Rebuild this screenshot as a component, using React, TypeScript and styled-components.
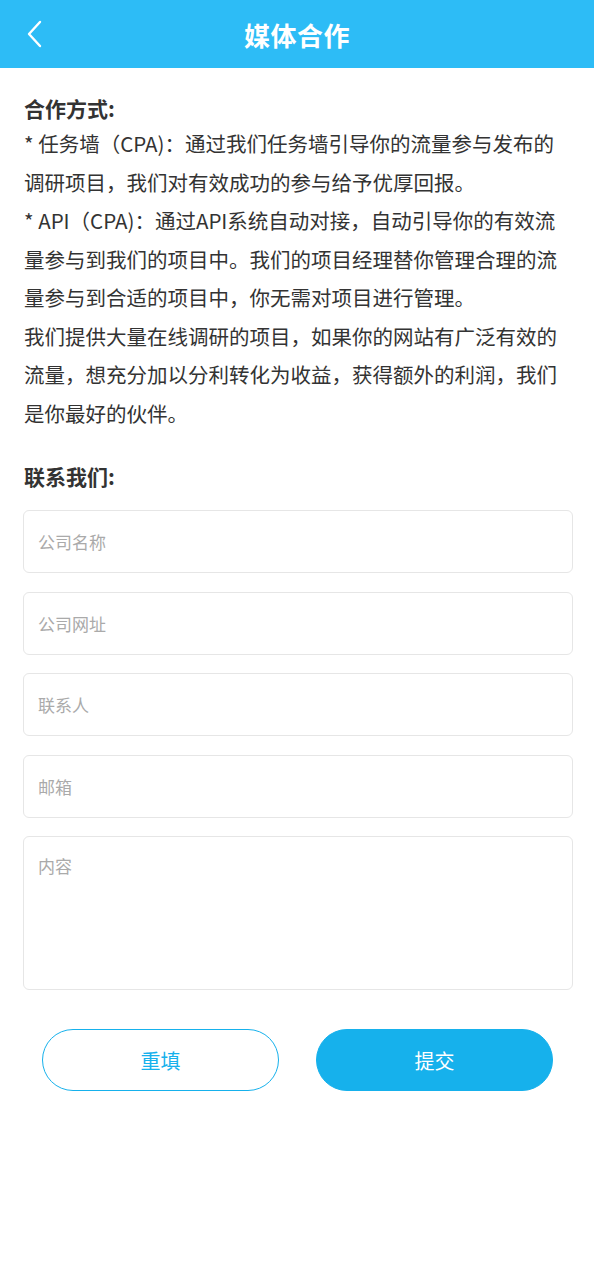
import React, { useState } from 'react';
import styled, { createGlobalStyle } from 'styled-components';

const GlobalStyle = createGlobalStyle`
  html, body {
    margin: 0;
    padding: 0;
    background: #fff;
  }
  body {
    font-family: "Noto Sans CJK SC", "Noto Sans", sans-serif;
    color: #333;
  }
  * {
    box-sizing: border-box;
  }
`;

const Page = styled.div`
  width: 594px;
  min-height: 1280px;
  background: #fff;
`;

const Header = styled.header`
  position: relative;
  height: 68px;
  background: #2dbcf6;
  display: flex;
  align-items: center;
  justify-content: center;
`;

const BackButton = styled.button`
  position: absolute;
  left: 19px;
  top: 18px;
  width: 32px;
  height: 32px;
  padding: 0;
  border: none;
  background: none;
  display: flex;
  align-items: center;
  justify-content: center;
  cursor: pointer;
`;

const Title = styled.h1`
  margin: 0;
  color: #fff;
  font-size: 26px;
  font-weight: 700;
  letter-spacing: 0.5px;
`;

const Content = styled.main`
  padding: 24px 24px 0;
`;

const SectionTitle = styled.h2`
  margin: 0;
  font-size: 21px;
  font-weight: 700;
  line-height: 32px;
  color: #333;
`;

const Paragraph = styled.p`
  margin: 0;
  font-size: 20.5px;
  line-height: 38.5px;
  color: #333;
`;

const Intro = styled.div`
  margin-bottom: 28px;
`;

const Form = styled.form`
  display: flex;
  flex-direction: column;
  gap: 18.5px;
  margin: 18px -3px 0 -1px;
`;

const Field = styled.input`
  width: 100%;
  height: 63px;
  padding: 0 14px;
  border: 1px solid #e6e6e6;
  border-radius: 6px;
  font-family: inherit;
  font-size: 17px;
  color: #333;
  outline: none;
  &::placeholder {
    color: #aaa;
  }
`;

const Area = styled.textarea`
  width: 100%;
  height: 154px;
  padding: 16px 14px;
  border: 1px solid #e6e6e6;
  border-radius: 6px;
  font-family: inherit;
  font-size: 17px;
  color: #333;
  resize: none;
  outline: none;
  &::placeholder {
    color: #aaa;
  }
`;

const Actions = styled.div`
  display: flex;
  justify-content: space-between;
  padding: 0 20px 0 19px;
  margin-top: 20.5px;
`;

const Pill = styled.button<{ $filled?: boolean }>`
  width: 237px;
  height: 62px;
  border-radius: 31px;
  border: 1px solid #16b1ec;
  background: ${(p) => (p.$filled ? '#16b1ec' : '#fff')};
  color: ${(p) => (p.$filled ? '#fff' : '#16b1ec')};
  font-family: inherit;
  font-size: 20px;
  cursor: pointer;
`;

const emptyForm = { name: '', site: '', contact: '', email: '', content: '' };

export default function App() {
  const [form, setForm] = useState(emptyForm);

  const update = (key: keyof typeof form) => (e: React.ChangeEvent<HTMLInputElement | HTMLTextAreaElement>) =>
    setForm({ ...form, [key]: e.target.value });

  return (
    <Page>
      <GlobalStyle />
      <Header>
        <BackButton aria-label="返回">
          <svg width="18" height="28" viewBox="0 0 18 28" fill="none">
            <path d="M14 2 L3 14 L14 26" stroke="#fff" strokeWidth="2.4" strokeLinecap="round" strokeLinejoin="round" />
          </svg>
        </BackButton>
        <Title>媒体合作</Title>
      </Header>
      <Content>
        <Intro>
          <SectionTitle>合作方式:</SectionTitle>
          <Paragraph>* 任务墙（CPA)：通过我们任务墙引导你的流量参与发布的调研项目，我们对有效成功的参与给予优厚回报。</Paragraph>
          <Paragraph>* API（CPA)：通过API系统自动对接，自动引导你的有效流量参与到我们的项目中。我们的项目经理替你管理合理的流量参与到合适的项目中，你无需对项目进行管理。</Paragraph>
          <Paragraph>我们提供大量在线调研的项目，如果你的网站有广泛有效的流量，想充分加以分利转化为收益，获得额外的利润，我们是你最好的伙伴。</Paragraph>
        </Intro>
        <SectionTitle>联系我们:</SectionTitle>
        <Form onSubmit={(e) => e.preventDefault()}>
          <Field placeholder="公司名称" value={form.name} onChange={update('name')} />
          <Field placeholder="公司网址" value={form.site} onChange={update('site')} />
          <Field placeholder="联系人" value={form.contact} onChange={update('contact')} />
          <Field placeholder="邮箱" value={form.email} onChange={update('email')} />
          <Area placeholder="内容" value={form.content} onChange={update('content')} />
          <Actions>
            <Pill type="button" onClick={() => setForm(emptyForm)}>重填</Pill>
            <Pill type="submit" $filled>提交</Pill>
          </Actions>
        </Form>
      </Content>
    </Page>
  );
}
